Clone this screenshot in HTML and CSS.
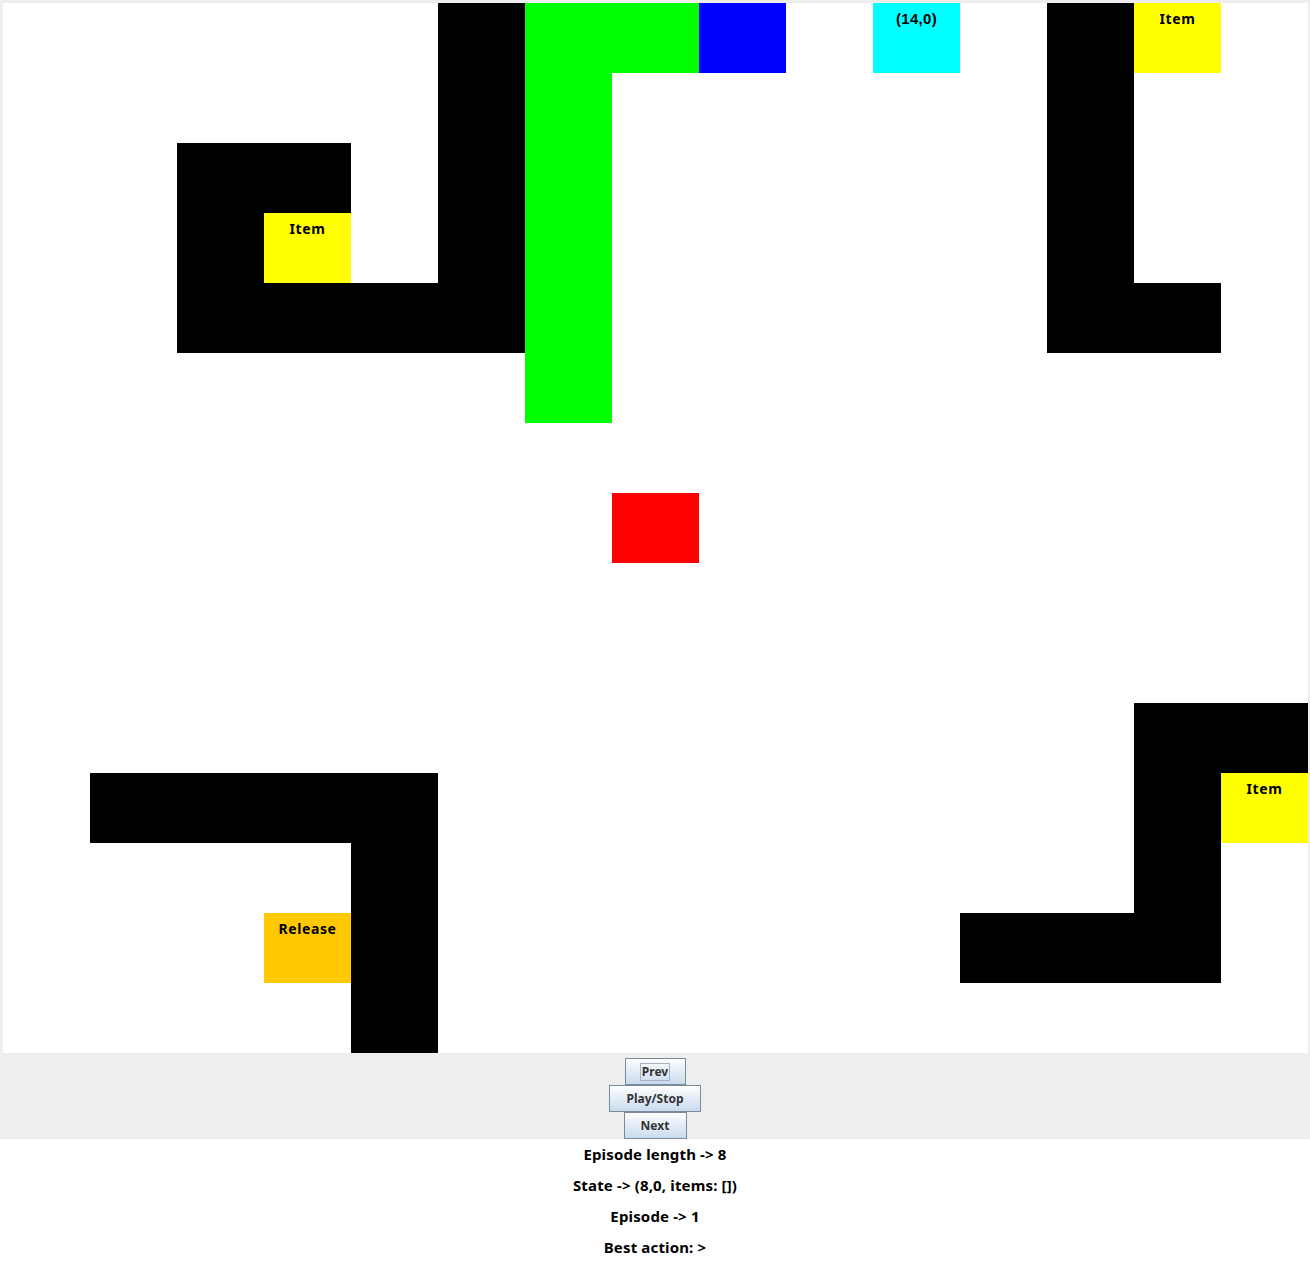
FILE: index.html
```html
<!DOCTYPE html>
<html>
<head>
<meta charset="utf-8">
<link rel="stylesheet" href="styles.css">
</head>
<body>
<div class="world">
  <div class="cell black" style="grid-area:1/6"></div>
  <div class="cell green" style="grid-area:1/7"></div>
  <div class="cell green" style="grid-area:1/8"></div>
  <div class="cell blue" style="grid-area:1/9"></div>
  <div class="cell cyan coord" style="grid-area:1/11">(14,0)</div>
  <div class="cell black" style="grid-area:1/13"></div>
  <div class="cell yellow" style="grid-area:1/14">Item</div>

  <div class="cell black" style="grid-area:2/6"></div>
  <div class="cell green" style="grid-area:2/7"></div>
  <div class="cell black" style="grid-area:2/13"></div>

  <div class="cell black" style="grid-area:3/3"></div>
  <div class="cell black" style="grid-area:3/4"></div>
  <div class="cell black" style="grid-area:3/6"></div>
  <div class="cell green" style="grid-area:3/7"></div>
  <div class="cell black" style="grid-area:3/13"></div>

  <div class="cell black" style="grid-area:4/3"></div>
  <div class="cell yellow" style="grid-area:4/4">Item</div>
  <div class="cell black" style="grid-area:4/6"></div>
  <div class="cell green" style="grid-area:4/7"></div>
  <div class="cell black" style="grid-area:4/13"></div>

  <div class="cell black" style="grid-area:5/3"></div>
  <div class="cell black" style="grid-area:5/4"></div>
  <div class="cell black" style="grid-area:5/5"></div>
  <div class="cell black" style="grid-area:5/6"></div>
  <div class="cell green" style="grid-area:5/7"></div>
  <div class="cell black" style="grid-area:5/13"></div>
  <div class="cell black" style="grid-area:5/14"></div>

  <div class="cell green" style="grid-area:6/7"></div>

  <div class="cell red" style="grid-area:8/8"></div>

  <div class="cell black" style="grid-area:11/14"></div>
  <div class="cell black" style="grid-area:11/15"></div>

  <div class="cell black" style="grid-area:12/2"></div>
  <div class="cell black" style="grid-area:12/3"></div>
  <div class="cell black" style="grid-area:12/4"></div>
  <div class="cell black" style="grid-area:12/5"></div>
  <div class="cell black" style="grid-area:12/14"></div>
  <div class="cell yellow" style="grid-area:12/15">Item</div>

  <div class="cell black" style="grid-area:13/5"></div>
  <div class="cell black" style="grid-area:13/14"></div>

  <div class="cell orange" style="grid-area:14/4">Release</div>
  <div class="cell black" style="grid-area:14/5"></div>
  <div class="cell black" style="grid-area:14/12"></div>
  <div class="cell black" style="grid-area:14/13"></div>
  <div class="cell black" style="grid-area:14/14"></div>

  <div class="cell black" style="grid-area:15/5"></div>
</div>
<div class="controls">
  <button class="btn btn-prev"><span class="focus">Prev</span></button>
  <button class="btn btn-play">Play/Stop</button>
  <button class="btn btn-next">Next</button>
</div>
<div class="info">
  <div class="line">Episode length -&gt; 8</div>
  <div class="line">State -&gt; (8,0, items: [])</div>
  <div class="line">Episode -&gt; 1</div>
  <div class="line">Best action: &gt;</div>
</div>
</body>
</html>
```
FILE: styles.css
```css
html, body {
  margin: 0;
  padding: 0;
}
body {
  width: 1310px;
  height: 1263px;
  background: #ffffff;
  font-family: "Noto Sans", "DejaVu Sans", sans-serif;
  overflow: hidden;
}
.world {
  display: grid;
  grid-template-columns: repeat(15, 87px);
  grid-template-rows: repeat(15, 70px);
  width: 1305px;
  height: 1050px;
  background: #ffffff;
  border-top: 3px solid #eeeeee;
  border-left: 3px solid #eeeeee;
  border-right: 2px solid #eeeeee;
}
.cell {
  font-size: 14px;
  letter-spacing: 0.6px;
  font-weight: bold;
  text-align: center;
  line-height: 18px;
  padding-top: 7px;
  color: #000;
  box-sizing: border-box;
}
.coord {
  font-family: "Liberation Sans", Arial, sans-serif;
  font-size: 15px;
  letter-spacing: 0.3px;
}
.black { background: #000000; }
.green { background: #00ff00; }
.blue { background: #0000ff; }
.cyan { background: #00ffff; }
.yellow { background: #ffff00; }
.red { background: #ff0000; }
.orange { background: #ffc800; }

.controls {
  background: #eeeeee;
  display: flex;
  flex-direction: column;
  align-items: center;
  padding-top: 5px;
  height: 81px;
  box-sizing: content-box;
}
.btn {
  height: 27px;
  box-sizing: border-box;
  margin: 0;
  padding: 0;
  border: 1px solid #7a8a99;
  border-radius: 0;
  background: linear-gradient(#ffffff 0%, #eef3f9 30%, #c9dbee 100%);
  font-family: "Noto Sans", "DejaVu Sans", sans-serif;
  font-weight: bold;
  font-size: 12px;
  color: #333333;
  display: flex;
  align-items: center;
  justify-content: center;
}
.btn-prev { width: 61px; }
.btn-play { width: 92px; }
.btn-next { width: 63px; }
.focus {
  border: 1px solid #a3b3c4;
  padding: 0 1px;
  line-height: 16px;
}
.info {
  display: flex;
  flex-direction: column;
  align-items: center;
}
.line {
  line-height: 31px;
  font-size: 15px;
  letter-spacing: 0.15px;
  font-weight: bold;
  color: #000;
}
```
